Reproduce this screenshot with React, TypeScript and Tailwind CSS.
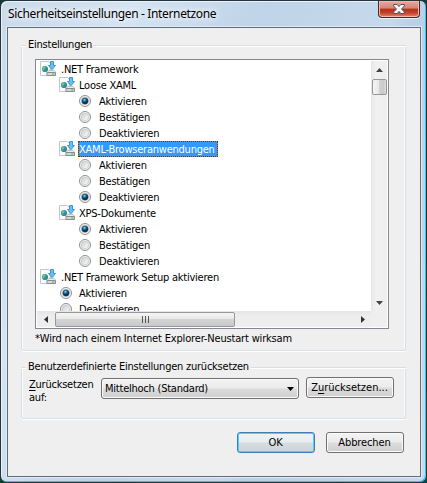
import React from "react";

const BODY = "font-['DejaVu_Sans_Condensed','DejaVu_Sans',sans-serif] [font-stretch:condensed] tracking-[-0.23px]";

function ZoneIcon() {
  return (
    <svg width="16" height="16" viewBox="0 0 16 16" className="shrink-0">
      <path d="M.5.5h8l2 2v12H.5z" fill="#fbfcfd" stroke="#c3c7cb" />
      <circle cx="5" cy="8" r="3.1" fill="#3b86cc" />
      <path d="M2.6 6.6 4.6 5.2l1.2 1-1.2 1.6L3.4 9.6 2.3 8.6z" fill="#6fcf62" />
      <path d="M6 7.6 7.8 7l-.2 2.4-1.4 1z" fill="#2c9a44" />
      <path d="M10.5.5h3v4h2L12 8.7 8.5 4.5h2z" fill="#6cc0f0" stroke="#2c8fd0" strokeWidth=".9" />
      <path d="m8 10.4 1-1h5l1 1v1H8z" fill="#f3f4f4" stroke="#a2a5a8" strokeWidth=".7" />
      <path d="M6.9 11.5h8.6v3H6.9z" fill="#d3d5d7" stroke="#808487" strokeWidth=".9" />
      <path d="M12.3 13h2" stroke="#42bd3d" />
    </svg>
  );
}

function Radio({ on }: { on?: boolean }) {
  return (
    <svg width="12" height="12" viewBox="0 0 12 12" className="shrink-0">
      <defs>
        <linearGradient id="rim" x2="1" y2="1">
          <stop stopColor="#cbcfd3" />
          <stop offset="1" stopColor="#fbfbfb" />
        </linearGradient>
        <radialGradient id="dot" cx=".4" cy=".3">
          <stop stopColor="#9be6ff" />
          <stop offset=".4" stopColor="#2586b8" />
          <stop offset="1" stopColor="#092f50" />
        </radialGradient>
      </defs>
      <circle cx="6" cy="6" r="5.5" fill="#f6f6f6" stroke="#8e8f8f" />
      <circle cx="6" cy="6" r="3.8" fill="url(#rim)" stroke="#b8bbbe" strokeWidth=".6" />
      {on && <circle cx="6" cy="6" r="3.1" fill="url(#dot)" stroke="#153f60" strokeWidth=".6" />}
    </svg>
  );
}

function Group({ label }: { label: string }) {
  return (
    <div className="flex h-4 items-center">
      <span className="h-px w-[5px] bg-[#d5dfe9] shadow-[0_1px_0_#fff]" />
      <span className="px-[2px] whitespace-nowrap">{label}</span>
      <span className="h-px flex-1 bg-[#d5dfe9] shadow-[0_1px_0_#fff]" />
    </div>
  );
}

const GROUP_BOX = "rounded-[3px] border border-t-0 border-[#d5dfe9] shadow-[inset_-1px_0_0_#fafcfd,inset_1px_0_0_#fafcfd,0_1px_0_#fff]";

type Row = { level: number; text: string; radio?: boolean; on?: boolean; selected?: boolean };
const rows: Row[] = [
  { level: 0, text: ".NET Framework" },
  { level: 1, text: "Loose XAML" },
  { level: 2, text: "Aktivieren", radio: true, on: true },
  { level: 2, text: "Bestätigen", radio: true },
  { level: 2, text: "Deaktivieren", radio: true },
  { level: 1, text: "XAML-Browseranwendungen", selected: true },
  { level: 2, text: "Aktivieren", radio: true },
  { level: 2, text: "Bestätigen", radio: true },
  { level: 2, text: "Deaktivieren", radio: true, on: true },
  { level: 1, text: "XPS-Dokumente" },
  { level: 2, text: "Aktivieren", radio: true, on: true },
  { level: 2, text: "Bestätigen", radio: true },
  { level: 2, text: "Deaktivieren", radio: true },
  { level: 0, text: ".NET Framework Setup aktivieren" },
  { level: 1, text: "Aktivieren", radio: true, on: true },
  { level: 1, text: "Deaktivieren", radio: true },
];
const indent = ["pl-[3px]", "pl-[22px]", "pl-[42px]"];

function TreeRow({ row }: { row: Row }) {
  return (
    <div className={"flex h-4 items-center " + (row.radio && row.level === 1 ? "pl-[23px]" : indent[row.level])}>
      {row.radio ? <Radio on={row.on} /> : <ZoneIcon />}
      <span
        className={
          "flex h-4 items-center pt-[2px] whitespace-nowrap " +
          (row.radio ? (row.level === 1 ? "ml-[6px] pl-px" : "ml-[7px] pl-px") : row.level === 0 ? "ml-[4px] pl-px" : "ml-[3px] pl-px") +
          (row.selected ? " w-[140px] bg-[#3399ff] text-white outline-1 -outline-offset-1 outline-dotted outline-[#6b3c00]" : "")
        }
      >
        {row.text}
      </span>
    </div>
  );
}

const BUTTON =
  "flex items-center justify-center rounded-[3px] border border-[#707070] bg-[linear-gradient(#f3f3f3_0%,#ebebeb_49%,#dcdcdc_51%,#cfcfcf_100%)] shadow-[inset_0_0_0_1px_#fbfbfb]";

export default function App() {
  return (
    <div className="h-[483px] w-[427px] overflow-hidden bg-[#123b3c]">
      <div className="flex h-[483px] w-[427px] flex-col overflow-hidden rounded-[7px] border border-[#26323c] bg-[linear-gradient(110deg,#c9daeb_0%,#d5e3f2_22%,#bfd4e8_44%,#c6d9ec_66%,#bad0e7_70%,#c8daeb_100%)] shadow-[inset_-1px_-1px_0_#27c9ee,inset_1px_1px_0_#e8f4fc]">
        <div className="flex h-[26px] shrink-0 justify-between pr-[6px] pl-[7px]">
          <div className="flex h-[25px] items-center font-['Noto_Sans',sans-serif] text-[12px] tracking-[-0.35px] whitespace-nowrap text-black [text-shadow:0_0_7px_#fff,0_0_7px_#fff]">
            Sicherheitseinstellungen - Internetzone
          </div>
          <div className="flex h-[17px] w-[42px] items-center justify-center rounded-b-[4px] border border-t-0 border-[#4b2428] bg-[linear-gradient(#e5aca0_0%,#d78475_45%,#b92f18_50%,#c1442b_75%,#e28b68_100%)] shadow-[inset_0_0_0_1px_#efb9ad,0_1px_0_#e9f3fc]">
            <svg width="12" height="10" viewBox="0 0 12 10">
              <path d="M.7.5h3.5L6 2.6 7.8.5h3.5v1.6L8.5 5l2.8 2.9v1.6H7.8L6 7.4 4.2 9.5H.7V7.9L3.5 5 .7 2.1z" fill="#f8f8f8" stroke="#4d5362" />
            </svg>
          </div>
        </div>

        <div className={"ml-[6px] h-[450px] w-[414px] shrink-0 border border-[#606e7c] bg-[#efefef] pt-[9px] pr-[13px] pl-[13px] text-[11px] text-black shadow-[0_0_0_1px_#dfeaf6] " + BODY}>
          <section className="h-[314px] w-[385px]">
            <Group label="Einstellungen" />
            <div className={"-mt-[8px] h-[306px] pt-[14px] pl-[13px] " + GROUP_BOX}>
              <div className="flex h-[270px] w-[354px] flex-col border border-[#828790] bg-white p-px">
                <div className="flex h-[250px]">
                  <div className="h-[250px] w-[334px] overflow-hidden">
                    {rows.map((row, i) => (
                      <TreeRow key={i} row={row} />
                    ))}
                  </div>
                  <div className="flex w-[16px] flex-col items-center justify-between bg-[linear-gradient(90deg,#e6e6e6,#f1f1f1_30%,#eeeeee)]">
                    <div className="flex flex-col items-center">
                      <div className="flex h-[18px] items-center">
                        <svg width="7" height="4" viewBox="0 0 7 4"><path d="M3.5 0 7 4H0z" fill="#404448" /></svg>
                      </div>
                      <div className="h-[16px] w-[15px] rounded-[2px] border border-[#979797] bg-[linear-gradient(90deg,#f5f5f5,#e8e8e8_45%,#d1d1d3_50%,#cbcbcd_80%,#dedede)]" />
                    </div>
                    <div className="flex h-[17px] items-center">
                      <svg width="7" height="4" viewBox="0 0 7 4"><path d="M0 0h7L3.5 4z" fill="#404448" /></svg>
                    </div>
                  </div>
                </div>
                <div className="flex h-[16px]">
                  <div className="flex w-[334px] items-center justify-between bg-[linear-gradient(#e5e5e5,#ededed_30%,#eeeeee)]">
                    <div className="flex items-center">
                      <div className="flex w-[18px] justify-center pr-px">
                        <svg width="4" height="7" viewBox="0 0 4 7"><path d="M4 0v7L0 3.5z" fill="#303438" /></svg>
                      </div>
                      <div className="flex h-[15px] w-[180px] items-center justify-center gap-[2px] rounded-[2px] border border-[#979797] bg-[linear-gradient(#f5f5f5,#e8e8e8_45%,#d4d4d6_50%,#c9c9cb)]">
                        <i className="h-[7px] w-px bg-[#55585b]" />
                        <i className="h-[7px] w-px bg-[#55585b]" />
                        <i className="h-[7px] w-px bg-[#55585b]" />
                      </div>
                    </div>
                    <svg className="mr-[6px]" width="4" height="7" viewBox="0 0 4 7"><path d="M0 0v7l4-3.5z" fill="#303438" /></svg>
                  </div>
                  <div className="w-[16px] bg-[#efefef]" />
                </div>
              </div>
              <div className="mt-[2px] flex h-4 items-center tracking-[-0.17px] whitespace-nowrap">*Wird nach einem Internet Explorer-Neustart wirksam</div>
            </div>
          </section>

          <section className="mt-[8px] h-[60px] w-[385px]">
            <Group label="Benutzerdefinierte Einstellungen zurücksetzen" />
            <div className={"-mt-[8px] flex h-[52px] pt-[11px] pl-[7px] " + GROUP_BOX}>
              <div className="w-[72px] leading-[13px]">
                <span className="underline underline-offset-2">Z</span>urücksetzen<br />auf:
              </div>
              <div className={BUTTON + " h-[21px] w-[198px] !justify-between pr-[4px] pl-[3px]"}>
                <span className="pt-[2px]">Mittelhoch (Standard)</span>
                <svg width="7" height="4" viewBox="0 0 7 4"><path d="M0 0h7L3.5 4z" fill="#000" /></svg>
              </div>
              <div className={BUTTON + " -mt-px ml-[7px] h-[21px] w-[88px] pt-px pr-px tracking-normal"}>
                Z<span className="underline underline-offset-2">u</span>rücksetzen...
              </div>
            </div>
          </section>

          <div className="mt-[13px] ml-[216px] flex gap-[11px]">
            <div className="flex h-[21px] w-[78px] items-center justify-center rounded-[3px] border border-[#3c7fb1] bg-[linear-gradient(#f0f3f5_0%,#e7ecef_49%,#d5dde1_51%,#ced4d7_100%)] pt-[2px] pr-px shadow-[inset_0_0_0_1px_#48d4fa]">OK</div>
            <div className={BUTTON + " h-[21px] w-[78px] pt-[2px] pr-px tracking-[-0.1px]"}>Abbrechen</div>
          </div>
        </div>
      </div>
    </div>
  );
}
